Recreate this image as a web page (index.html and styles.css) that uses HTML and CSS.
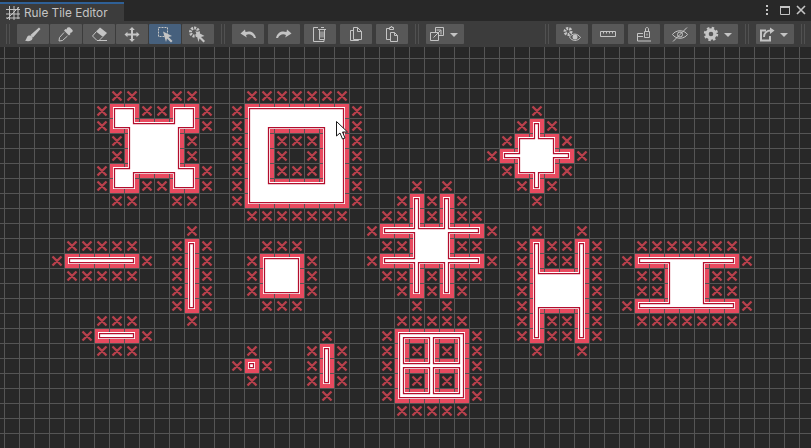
FILE: index.html
```html
<!DOCTYPE html>
<html lang="en">
<head>
<meta charset="utf-8">
<title>Rule Tile Editor</title>
<link rel="stylesheet" href="styles.css">
</head>
<body>
<div class="window">
  <header class="titlebar">
    <div class="tab">
      <svg class="tab-icon" width="16" height="16" viewBox="0 0 16 16"><path d="M4.500 1V15M9 1V15M13 2V14M1 4.500H15M1 9H15M1 13H15M2 14L14 2"/></svg>
      <span class="tab-label">Rule Tile Editor</span>
    </div>
    <div class="window-controls">
      <svg class="kebab" width="6" height="12" viewBox="0 0 6 12"><path class="solid" d="M2 1h2v2H2zM2 5h2v2H2zM2 9h2v2H2z"/></svg>
      <svg width="12" height="12" viewBox="0 0 12 12"><path class="line" d="M1.500 2.500h9v8h-9z"/><path class="solid" d="M1 2h10v2H1z"/></svg>
      <svg class="close" width="10" height="10" viewBox="0 0 10 10"><path class="line wide" d="M1 1l8 8M9 1l-8 8"/></svg>
    </div>
  </header>

  <nav class="toolbar">
    <i class="grip"></i>
    <div class="group tight">
      <button class="btn"><svg viewBox="0 0 32 20"><path class="solid" d="M22 3.500l1.500 1.500-7.500 8.500-2.500-2.500zM12 11.500c2-.5 4 1 3.500 3-.5 2.500-4.500 3.500-7.500 2 2-1 1.500-4.500 4-5z"/></svg></button>
      <button class="btn"><svg viewBox="0 0 32 20"><path class="solid" d="M20 3.500l2.500 2.500c.5 1 0 2-1 2.500l-1.500.5.500 1-1.500 1.500-5-5 1.500-1.500 1 .5.500-1.500c.5-1 2-1 3-.500z"/><path class="line" d="M14 8.500l-4.500 5-.5 3.500 3.500-.5 5-4.500"/></svg></button>
      <button class="btn"><svg viewBox="0 0 32 20"><path class="solid" d="M17 3.500l7 5.500-4 4-7-5.500z"/><path class="line" d="M13 8l-3.500 4 4.500 4.500h2l3.500-3.500M14 16.500h10"/></svg></button>
      <button class="btn"><svg viewBox="0 0 32 20"><path class="solid" d="M16 3l2.800 3h-1.800v3.500h3.500v-1.800l3 2.800-3 2.800v-1.800h-3.500v3.500h1.800l-2.800 3-2.800-3h1.800v-3.500h-3.500v1.800l-3-2.800 3-2.800v1.800h3.500v-3.500h-1.800z"/></svg></button>
      <button class="btn active"><svg viewBox="0 0 32 20"><path class="line dashed" d="M9.500 3.500h9v9h-9z"/><path class="solid" d="M14 7.500l9 4.500-3.500 1 4 4-1.500 1.500-4-4-1 3.500z"/></svg></button>
      <button class="btn"><svg viewBox="0 0 32 20"><circle class="teeth" cx="12.500" cy="8" r="4"/><path class="solid" d="M13.500 7l9 5-3.500 1 4 4-1.500 1.500-4-4-1 3.500z"/></svg></button>
    </div>
    <i class="grip"></i>
    <div class="group">
      <button class="btn"><svg viewBox="0 0 32 20"><path class="solid" d="M8.500 9.500l4.500-4 .5 2.500c4-1.500 9-.5 10.500 6h-2c-1.500-3.500-5-4.500-8-3l.8 2.500z"/></svg></button>
      <button class="btn"><svg viewBox="0 0 32 20"><path class="solid" d="M23.500 9.500l-4.500-4-.5 2.500c-4-1.500-9-.5-10.500 6h2c1.500-3.500 5-4.500 8-3l-.8 2.500z"/></svg></button>
      <button class="btn"><svg viewBox="0 0 32 20"><path class="line" d="M14 3.500H9.500v14H20v-2M14 5.500h8M15.500 5.500v10h5v-10M17 3.500h3M17 7.500v6M19 7.500v6"/></svg></button>
      <button class="btn"><svg viewBox="0 0 32 20"><path class="line" d="M13.500 3.500h4l4 4v8h-8zM17.500 3.500v4h4M13.500 6.500h-3v10h8v-1"/></svg></button>
      <button class="btn"><svg viewBox="0 0 32 20"><path class="line" d="M13 4.500h-2.500v11H14M18 4.500h-.5M13.500 5.500v-2h1.500v-1h1v1h1.500v2zM14.500 8.500h4l3 3v6h-7zM18.500 8.500v3h3"/></svg></button>
    </div>
    <i class="grip"></i>
    <button class="btn wide-btn"><svg viewBox="0 0 38 20"><path class="line" d="M4.500 8.500h8v8h-8zM9.500 8.500v-5h8v8h-5M7.500 13.500l7-7M10.500 6h4.500v4.500"/><path class="solid caret" d="M24 9h8l-4 4z"/></svg></button>
    <i class="grip push"></i>
    <div class="group">
      <button class="btn"><svg viewBox="0 0 32 20"><circle class="teeth" cx="12" cy="7.500" r="3"/><path class="line" d="M13.500 13c2.500-4 8-4 11 .5-3 4-8.500 4-11-.5z"/><circle class="solid" cx="19" cy="13" r="2.500"/></svg></button>
      <button class="btn"><svg viewBox="0 0 32 20"><path class="line" d="M8.500 7.500h15v5h-15zM11.500 7.500v2M14.500 7.500v2M17.500 7.500v2M20.500 7.500v2"/></svg></button>
      <button class="btn"><svg viewBox="0 0 32 20"><path class="line" d="M15 9.500H9.500v7.500h13.500M9.500 12.500H15M17.500 7V5c0-2 3-2 3 0v2"/><path class="lock-body" d="M16.500 7.500h5v6h-5z"/><path class="solid" d="M18.500 9.500h1v2h-1z"/></svg></button>
      <button class="btn"><svg viewBox="0 0 32 20"><path class="line" d="M8.500 10.500c3.500-5 11.500-5 15 0-3.500 5-11.500 5-15 0zM23 3.500L9 17.500"/><circle class="line" cx="16" cy="10.500" r="2.500"/></svg></button>
      <button class="btn wide-btn"><svg viewBox="0 0 38 20"><circle class="gear-ring" cx="11" cy="10" r="4"/><circle class="gear-teeth" cx="11" cy="10" r="6"/><path class="solid caret" d="M24 9h8l-4 4z"/></svg></button>
    </div>
    <i class="grip"></i>
    <button class="btn wide-btn"><svg viewBox="0 0 38 20"><path class="line thick" d="M10 6.500H5V16.500h9V12"/><path class="line thick" d="M8 13c0-4 3-6.500 7-6.500"/><path class="solid" d="M14 3.500l4.500 3-4.500 3.500z"/><path class="solid caret" d="M24 9h8l-4 4z"/></svg></button>
    <i class="grip"></i>
  </nav>

  <svg class="board" id="board" width="811" height="401" viewBox="0 47 811 401">
    <defs>
      <pattern id="grid" x="4" y="43" width="15" height="15" patternUnits="userSpaceOnUse">
        <path class="grid-line" d="M.5 0V15M0 .5H15"/>
      </pattern>
    </defs>
    <g id="tiles"></g>
    <rect x="0" y="47" width="811" height="401" fill="url(#grid)"/>
    <g id="marks"></g>
    <path class="cursor" d="M336.500 121.500V136l3.500-3 2.500 6 2.500-1-2.500-6h5z"/>
  </svg>
</div>
<script src="board.js"></script>
</body>
</html>
```

FILE: styles.css
```css
* { box-sizing: border-box; }
html, body { margin: 0; padding: 0; }
body { width: 811px; height: 448px; overflow: hidden; background: #282828; font-family: "Inter", "Liberation Sans", sans-serif; }
.window { display: flex; flex-direction: column; width: 811px; height: 448px; }

.titlebar { display: flex; height: 21px; background: #282828; }
.tab { display: flex; align-items: center; gap: 3px; width: 124px; margin-top: 2px; padding-left: 5px; background: #3c3c3c; border-top: 2px solid #2f6096; }
.tab-icon path { fill: none; stroke: #c4c4c4; stroke-width: 1; }
.tab-label { font-size: 11.8px; color: #c4c4c4; white-space: nowrap; }
.window-controls { display: flex; align-items: flex-start; gap: 5px; margin-left: auto; padding: 4px 5px 0 0; }
.kebab { margin-right: 4px; }
.close { margin-top: 1px; }

.toolbar { display: flex; align-items: center; gap: 7px; height: 26px; padding: 0 6px; background: #3c3c3c; }
.grip { display: block; width: 4px; height: 20px; border-left: 1px solid #515151; border-right: 1px solid #515151; }
.push { margin-left: auto; }
.group { display: flex; gap: 4px; }
.group.tight { gap: 1px; }
.btn { display: block; width: 32px; height: 20px; padding: 0; border: 0; border-radius: 1px; background: #585858; }
.btn svg { display: block; width: 32px; height: 20px; }
.btn.wide-btn, .btn.wide-btn svg { width: 38px; }
.btn.active { background: #46607d; }

.solid { fill: #c4c4c4; }
.line { fill: none; stroke: #c4c4c4; stroke-width: 1; }
.line.wide { stroke-width: 1.6; }
.line.thick { stroke-width: 2; }
.line.dashed { stroke-dasharray: 2 1; }
.lock-body { fill: #585858; stroke: #c4c4c4; stroke-width: 1; }
.teeth { fill: none; stroke: #c4c4c4; stroke-width: 3; stroke-dasharray: 2 1; }
.gear-ring { fill: none; stroke: #c4c4c4; stroke-width: 3.4; }
.gear-teeth { fill: none; stroke: #c4c4c4; stroke-width: 2.4; stroke-dasharray: 2.4 2.31; }

.board { display: block; flex: none; background: #282828; }
.grid-line { fill: none; stroke: #555555; stroke-width: 1; }
.tile { fill: #e84a5f; }
.cross { fill: none; stroke: #b8404c; stroke-width: 2.4; filter: blur(.4px); }
.outline-fill { fill: #ffffff; fill-rule: evenodd; stroke: #ffffff; stroke-width: 3; stroke-linejoin: miter; }
.outline-line { fill: none; stroke: #b30e2d; stroke-width: 1.25; stroke-linejoin: miter; }
.cursor { fill: #ffffff; stroke: #1a1a1a; stroke-width: 1; }
```

FILE: board.js
```js
// Tile map: one string per row, first row is row 3 of the grid.
// '#' painted tile, 'x' rule mark, '.' empty. Column 0 starts at x=4, row 0 at y=43.
const FIRST_ROW = 3;
const MAP = [
  ".......xx..xx...xxxxxxx",
  "......x##xx##x.x#######x...........x",
  "......x######x.x#######x..........x#x",
  ".......x####x..x##xxx##x.........x###x",
  ".......x####x..x##x.x##x........x#####x",
  "......x######x.x##xxx##x.........x###x",
  "......x##xx##x.x#######x...x.x....x#x",
  ".......xx..xx..x#######x..x#x#x....x",
  "................xxxxxxx..xx#x#xx",
  "............x...........x#######x..x..x",
  "....xxxxx..x#x...xxx.....xx###xx..x#xx#x..xxxxxxx",
  "...x#####x.x#x..x###x...x#######x.x#xx#x.x#######x",
  "....xxxxx..x#x..x###x....xx#x#xx..x####x..xx###xx",
  "...........x#x..x###x.....x#x#x...x####x..xx###xx",
  "...........x#x...xxx.......x.x....x####x.x#######x",
  "......xxx...x.............xxxxx...x#xx#x..xxxxxxx",
  ".....x###x...........x...x#####x..x#xx#x",
  "......xxx.......x...x#x..x#x#x#x...x..x",
  "...............x#x..x#x..x#####x",
  "................x...x#x..x#x#x#x",
  ".....................x...x#####x",
  "..........................xxxxx"
];

const SVG_NS = "http://www.w3.org/2000/svg";
const INSET = 5.5;
const px = c => 4 + 15 * c;
const py = r => 43 + 15 * r;

const isTile = (c, r) => (MAP[r - FIRST_ROW] || "")[c] === "#";

function add(parent, cls, d) {
  const el = document.createElementNS(SVG_NS, "path");
  el.setAttribute("class", cls);
  el.setAttribute("d", d);
  parent.appendChild(el);
}

// Collect the boundary of the painted tiles as directed edges, interior on the right.
function boundaryEdges() {
  const edges = [];
  MAP.forEach((row, i) => {
    const r = i + FIRST_ROW;
    [...row].forEach((ch, c) => {
      if (ch !== "#") return;
      if (!isTile(c, r - 1)) edges.push([c, r, c + 1, r]);
      if (!isTile(c + 1, r)) edges.push([c + 1, r, c + 1, r + 1]);
      if (!isTile(c, r + 1)) edges.push([c + 1, r + 1, c, r + 1]);
      if (!isTile(c - 1, r)) edges.push([c, r + 1, c, r]);
    });
  });
  return edges;
}

// Chain edges into closed loops and merge collinear runs.
function loops(edges) {
  const byStart = new Map();
  edges.forEach(e => {
    const k = e[0] + "," + e[1];
    if (!byStart.has(k)) byStart.set(k, []);
    byStart.get(k).push(e);
  });
  const used = new Set();
  const result = [];
  edges.forEach(first => {
    if (used.has(first)) return;
    const loop = [];
    let e = first;
    while (e && !used.has(e)) {
      used.add(e);
      loop.push(e);
      e = (byStart.get(e[2] + "," + e[3]) || []).find(n => !used.has(n));
    }
    const merged = [];
    loop.forEach(s => {
      const last = merged[merged.length - 1];
      if (last && (last[0] === last[2]) === (s[0] === s[2])) { last[2] = s[2]; last[3] = s[3]; }
      else merged.push([...s]);
    });
    const a = merged[0], z = merged[merged.length - 1];
    if (merged.length > 1 && (a[0] === a[2]) === (z[0] === z[2])) { a[0] = z[0]; a[1] = z[1]; merged.pop(); }
    result.push(merged);
  });
  return result;
}

// Offset one loop inward by INSET pixels and return it as path data.
function insetPath(loop) {
  const offset = e => {
    if (e[1] === e[3]) return py(e[1]) + (e[2] > e[0] ? INSET : -INSET);
    return px(e[0]) + (e[3] > e[1] ? -INSET : INSET);
  };
  const pts = loop.map((e, i) => {
    const next = loop[(i + 1) % loop.length];
    return e[1] === e[3] ? [offset(next), offset(e)] : [offset(e), offset(next)];
  });
  return "M" + pts.map(p => p.join(" ")).join("L") + "Z";
}

const tiles = document.getElementById("tiles");
const marks = document.getElementById("marks");
let tileData = "", crossData = "";
MAP.forEach((row, i) => {
  const y = py(i + FIRST_ROW);
  [...row].forEach((ch, c) => {
    const x = px(c);
    if (ch === "#") tileData += `M${x} ${y}h16v16h-16z`;
    if (ch === "x") crossData += `M${x + 3.5} ${y + 3.5}l9 9m0 -9l-9 9`;
  });
});
add(tiles, "tile", tileData);
add(marks, "cross", crossData);
const outline = loops(boundaryEdges()).map(insetPath).join("");
add(marks, "outline-fill", outline);
add(marks, "outline-line", outline);
```
